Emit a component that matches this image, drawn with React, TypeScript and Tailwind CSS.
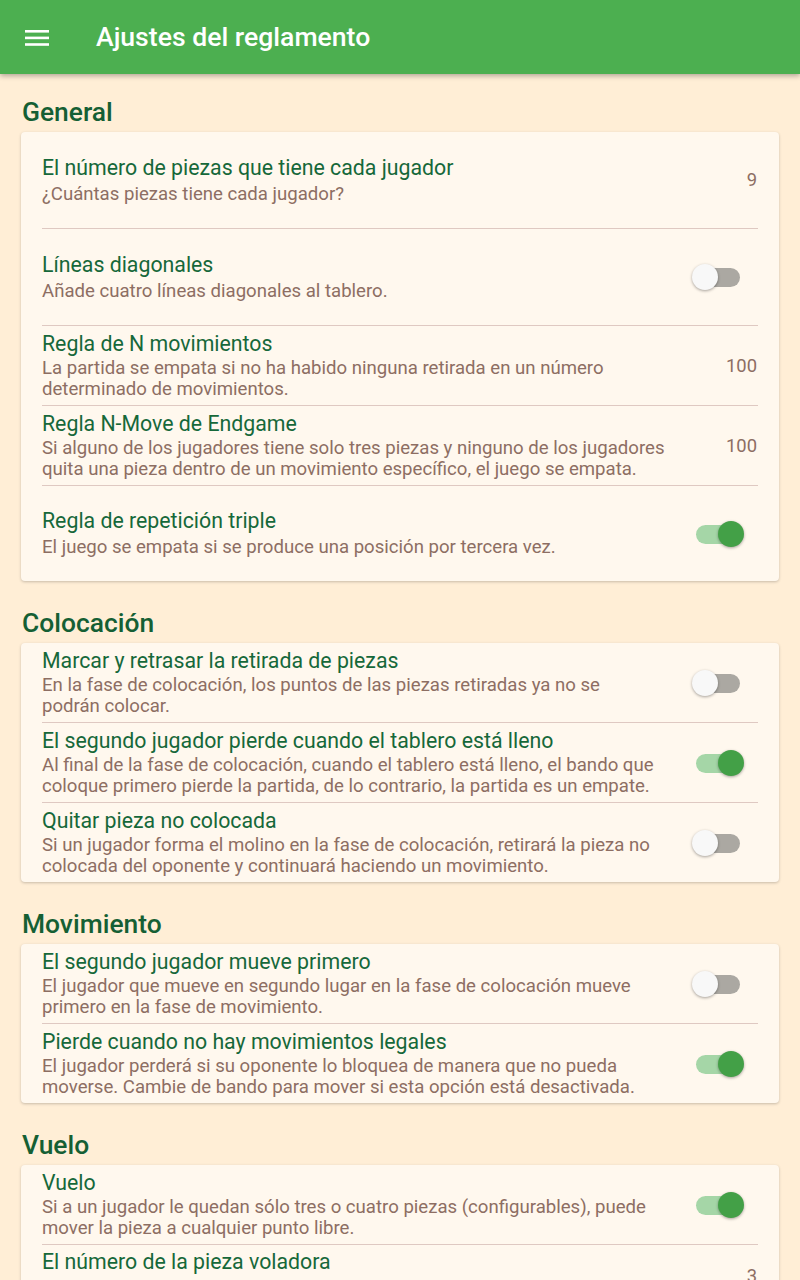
import React from "react";

type Row =
  | { kind: "value"; title: string; sub: string; value: string; h: number }
  | { kind: "switch"; title: string; sub: string; on: boolean; h: number };

function Switch({ on }: { on: boolean }) {
  return (
    <div className="relative w-[52px] h-[26px]">
      <div
        className={
          "absolute left-[4px] top-[4px] w-[44px] h-[19px] rounded-full " +
          (on ? "bg-[#a5d6a7]" : "bg-[#aba8a2]")
        }
      />
      <div
        className={
          "absolute top-0 w-[26px] h-[26px] rounded-full shadow-[0_1px_3px_rgba(0,0,0,0.35)] " +
          (on ? "right-0 bg-[#43a047]" : "left-0 bg-[#f8f8f8]")
        }
      />
    </div>
  );
}

function Item({ row }: { row: Row }) {
  const two = row.h >= 95;
  const isValue = row.kind === "value";
  return (
    <div className="flex items-center" style={{ height: row.h }}>
      <div
        className={
          "flex flex-col " + (isValue ? "flex-1 min-w-0 pr-[21px]" : "w-[616px] shrink-0")
        }
      >
        <div className="text-[21.3px] leading-[24px] text-[#16683a]">{row.title}</div>
        <div
          className={
            "text-[18.6px] leading-[21px] text-[#8d6e63] " + (two ? "mt-[4px]" : "mt-[2px]")
          }
        >
          {row.sub}
        </div>
      </div>
      {row.kind === "value" ? (
        <div className="text-[18.4px] text-[#8d6e63] mr-[1px] shrink-0">{row.value}</div>
      ) : (
        <div className="flex-1 flex justify-end">
          <div className="mr-[14px]">
            <Switch on={row.on} />
          </div>
        </div>
      )}
    </div>
  );
}

function Section({
  title,
  rows,
  first,
  children,
}: {
  title: string;
  rows: Row[];
  first?: boolean;
  children?: React.ReactNode;
}) {
  return (
    <div>
      <div
        className={
          "px-[22px] text-[26.4px] leading-[32px] font-medium text-[#155f34] mb-[4px] " +
          (first ? "mt-[22px]" : "mt-[26px]")
        }
      >
        {title}
      </div>
      <div className="mx-[21px] bg-[#fff8ee] rounded-[4px] shadow-[0_1px_3px_rgba(0,0,0,0.22)] px-[21px]">
        {rows.map((r, i) => (
          <div key={i}>
            {i > 0 && <div className="h-px bg-[#dfc9c2]" />}
            <Item row={r} />
          </div>
        ))}
        {children}
      </div>
    </div>
  );
}

export default function App() {
  const general: Row[] = [
    {
      kind: "value",
      title: "El número de piezas que tiene cada jugador",
      sub: "¿Cuántas piezas tiene cada jugador?",
      value: "9",
      h: 96,
    },
    {
      kind: "switch",
      title: "Líneas diagonales",
      sub: "Añade cuatro líneas diagonales al tablero.",
      on: false,
      h: 96,
    },
    {
      kind: "value",
      title: "Regla de N movimientos",
      sub: "La partida se empata si no ha habido ninguna retirada en un número determinado de movimientos.",
      value: "100",
      h: 79,
    },
    {
      kind: "value",
      title: "Regla N-Move de Endgame",
      sub: "Si alguno de los jugadores tiene solo tres piezas y ninguno de los jugadores quita una pieza dentro de un movimiento específico, el juego se empata.",
      value: "100",
      h: 79,
    },
    {
      kind: "switch",
      title: "Regla de repetición triple",
      sub: "El juego se empata si se produce una posición por tercera vez.",
      on: true,
      h: 95,
    },
  ];
  const colocacion: Row[] = [
    {
      kind: "switch",
      title: "Marcar y retrasar la retirada de piezas",
      sub: "En la fase de colocación, los puntos de las piezas retiradas ya no se podrán colocar.",
      on: false,
      h: 79,
    },
    {
      kind: "switch",
      title: "El segundo jugador pierde cuando el tablero está lleno",
      sub: "Al final de la fase de colocación, cuando el tablero está lleno, el bando que coloque primero pierde la partida, de lo contrario, la partida es un empate.",
      on: true,
      h: 79,
    },
    {
      kind: "switch",
      title: "Quitar pieza no colocada",
      sub: "Si un jugador forma el molino en la fase de colocación, retirará la pieza no colocada del oponente y continuará haciendo un movimiento.",
      on: false,
      h: 79,
    },
  ];
  const movimiento: Row[] = [
    {
      kind: "switch",
      title: "El segundo jugador mueve primero",
      sub: "El jugador que mueve en segundo lugar en la fase de colocación mueve primero en la fase de movimiento.",
      on: false,
      h: 79,
    },
    {
      kind: "switch",
      title: "Pierde cuando no hay movimientos legales",
      sub: "El jugador perderá si su oponente lo bloquea de manera que no pueda moverse. Cambie de bando para mover si esta opción está desactivada.",
      on: true,
      h: 79,
    },
  ];
  const vuelo: Row[] = [
    {
      kind: "switch",
      title: "Vuelo",
      sub: "Si a un jugador le quedan sólo tres o cuatro piezas (configurables), puede mover la pieza a cualquier punto libre.",
      on: true,
      h: 79,
    },
  ];

  return (
    <div
      className="min-h-screen bg-[#ffeed6] pb-[40px]"
      style={{ fontFamily: "Roboto, 'Noto Sans', sans-serif" }}
    >
      <div className="h-[74px] bg-[#4caf50] flex items-center shadow-[0_2px_5px_rgba(0,0,0,0.3)] relative z-10">
        <div className="w-[96px] flex pl-[25px]">
          <svg width="24" height="20" viewBox="0 0 24 20" className="mt-[-1px]">
            <rect x="0" y="3" width="24" height="2.6" fill="#fff" />
            <rect x="0" y="9.6" width="24" height="2.6" fill="#fff" />
            <rect x="0" y="16.2" width="24" height="2.6" fill="#fff" />
          </svg>
        </div>
        <div className="text-white text-[26.6px] font-medium leading-none mt-[1px]">
          Ajustes del reglamento
        </div>
      </div>
      <Section title="General" rows={general} first />
      <Section title="Colocación" rows={colocacion} />
      <Section title="Movimiento" rows={movimiento} />
      <Section title="Vuelo" rows={vuelo}>
        <div className="h-px bg-[#dfc9c2]" />
        <div className="flex h-[62px]">
          <div className="flex-1 pt-[5px] text-[21.3px] leading-[24px] text-[#16683a]">
            El número de la pieza voladora
          </div>
          <div className="flex items-center">
            <div className="text-[18.4px] text-[#8d6e63] mr-[1px]">3</div>
          </div>
        </div>
      </Section>
    </div>
  );
}
